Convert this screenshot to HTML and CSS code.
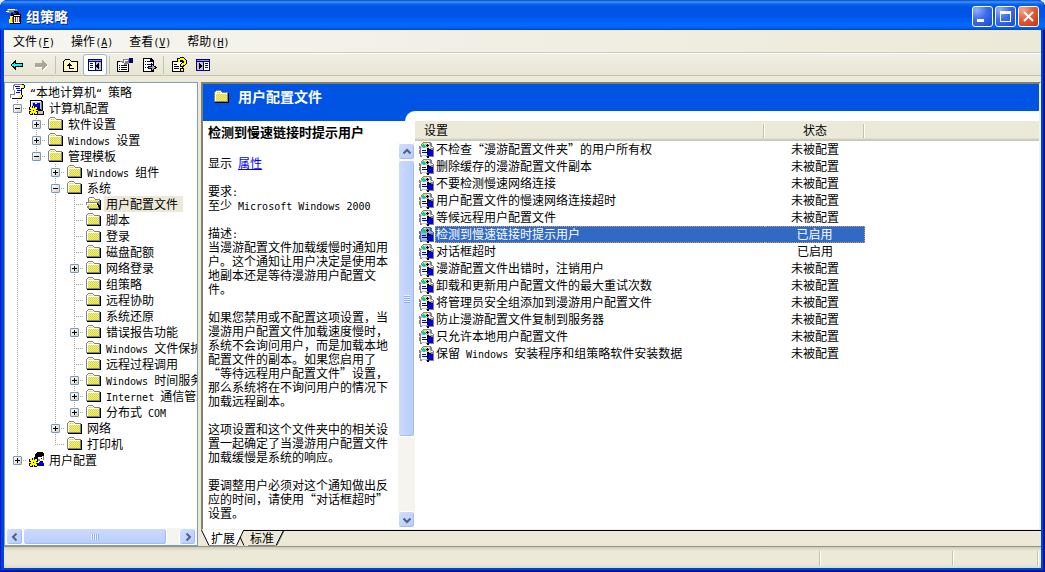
FILE: index.html
```html
<!DOCTYPE html>
<html lang="zh-CN">
<head>
<meta charset="utf-8">
<title>组策略</title>
<link rel="stylesheet" href="styles.css">
</head>
<body>
<svg class="defs" width="0" height="0" aria-hidden="true">
  <defs>
    <pattern id="dots" width="2" height="2" patternUnits="userSpaceOnUse">
      <rect width="2" height="2" fill="#ff0"/><rect width="1" height="1" fill="#c8c8c0"/><rect x="1" y="1" width="1" height="1" fill="#c8c8c0"/>
    </pattern>
    <pattern id="dots-alt" width="2" height="2" patternUnits="userSpaceOnUse">
      <rect width="2" height="2" fill="#c8c8c0"/><rect width="1" height="1" fill="#ff0"/><rect x="1" y="1" width="1" height="1" fill="#ff0"/>
    </pattern>
    <symbol id="folder" viewBox="0 0 16 16">
      <path fill="#848284" d="M2 1h5v1h1v1h6v10H0V3h1V2h1z"/>
      <path fill="#fff" d="M2 2h5v1h1v1h5v1H2v7H1V3h1z"/>
      <path fill="url(#dots)" d="M2 3h5v1H2zM2 5h11v7H2z"/>
      <path fill="#000" d="M14 4h1v10H1v-1h13z"/>
    </symbol>
    <symbol id="folder-open" viewBox="0 0 16 16">
      <path fill="#848284" d="M3 1h5v1h1v1h5v3h1v7H2v-1H1V9H0V6h2V2h1z"/>
      <path fill="#fff" d="M3 2h5v1h1v1h4v1H3zM1 7h10v1H2v2H1z"/>
      <path fill="url(#dots-alt)" d="M3 4h9v2H3zM2 8h9v1h1v3H3v-2H2z"/>
      <path fill="#000" d="M14 4h1v10H3v-1h10v-2h-1V9h-1V7h1v1h1v1h1z"/>
    </symbol>
    <symbol id="scroll" viewBox="0 0 16 16">
      <path fill="#848284" d="M4 0h9v1H5v1H4v4h1v5H1v3H0v-4h4V6H3V1h1z"/>
      <path fill="#fff" d="M5 1h6v2h1v2h-1v6H5V9h1V6H5zM1 11h8v3H2v-1H1z"/>
      <path fill="#000" d="M12 0h2v1h1v3h-1v1h-2v6h1v2h-1v2H2v-1h8v-3h1V4h1z"/>
      <path fill="#ff0" d="M12 1h2v3h-2zM9 11h3v2h-1v1H9z"/>
      <path fill="#00f" d="M5 2h5v1H5zM6 4h4v1H6zM7 6h4v1H7zM6 8h4v1H6z"/>
    </symbol>
    <symbol id="gear" viewBox="0 0 9 9">
      <path fill="#000" d="M3 0h3v1h3v7H8v1H1V8H0V1h3z"/>
      <path fill="#ff0" d="M4 0h1v2h1V1h2v2H7v1h2v1H7v1h1v2H6V7H5v2H4V7H3v1H1V6h1V5H0V4h2V3H1V1h2v1h1z"/>
      <path fill="#000" d="M4 4h1v1H4z"/>
    </symbol>
    <symbol id="computer" viewBox="0 0 16 16">
      <path fill="#000" d="M1 0h12v1h1v10h1v4H8V9H1z"/>
      <path fill="#c6c3c6" d="M2 1h10v8H2zM9 11h5v3H9z"/>
      <path fill="#fff" d="M2 1h10v1H3v6H2z"/>
      <path fill="#848284" d="M12 2h1v8h-1z"/>
      <path fill="#000084" d="M4 3h7v6H4z"/><path fill="#00f" d="M5 3h5v4H5z"/><path fill="#fff" d="M6 3h2v1H6z"/>
      <use href="#gear" x="0" y="6" width="9" height="9"/>
    </symbol>
    <symbol id="user" viewBox="0 0 16 16">
      <path fill="#000" d="M8 0h6v1h1v3h-2v1H9v4H5V5h1V2h1V1h1z"/>
      <path fill="#fff" d="M9 5h4V4h2v4h-1v2h-4z"/><path fill="#848284" d="M9 7h2v2H9zM14 4h1v4h-1z"/>
      <path fill="#000" d="M12 6h1v1h-1zM11 9h3v1h-3z"/>
      <path fill="#00f" d="M9 11l2-1h1l3 1v3H9z"/><path fill="#000084" d="M10 12h5v2h-5z"/>
      <use href="#gear" x="0" y="6" width="9" height="9"/>
    </symbol>
    <symbol id="policy" viewBox="0 0 16 16">
      <path class="tone-dark" d="M5 0h8v1h1v3h1v1h1v10H2v-3H1V8h1V7H1V4h2V2h1V1h1z"/>
      <path class="tone-mid" d="M5 1h7v3h1v3H3V5H2V4h2V2h1zM3 7h6v7H3z"/>
      <path class="tone-light" d="M3 6h6v7H3zM9 1h2v1H9zM11 4h1v2h-1zM4 14h4v1H4zM13 5h2v1h-2z"/>
      <path fill="#0cc" d="M4 3h1v1h1v1h1v1H5V5H4z"/><path fill="#0d4" d="M5 2h1v1h1v1h1v1H6V4H5z"/><path fill="#ff0" d="M6 1h2v1H6z"/>
      <path fill="#00f" d="M4 8h4v1H4zM4 10h4v1H4z"/>
      <path fill="#000" d="M9 2h1v1h1v1h-1v1H9V4H8V3h1zM9 6h2v1h2v1h-2v1h-1v4H9v-2H8v-1h1z"/>
      <path fill="#0000e0" d="M10 8h5v6h-5z"/><path fill="#000" d="M9 7h2v2H9zM9 14h2v2H9z"/>
    </symbol>
    <symbol id="console" viewBox="0 0 16 16">
      <path fill="#848284" d="M1 1h9l2 1 1 3h-2L9 4H6L4 5H1z"/><path fill="#fff" d="M2 1h7v1H2zM0 3h3v1H0z"/>
      <path fill="#000" d="M8 3h3l2 2v1h-3zM5 5h2v3H5zM4 15h4v1H4z"/>
      <path fill="#ff0" d="M4 8h3v7H3v-4h1z"/><path fill="#c60" d="M6 9h1v5H6z"/>
      <path fill="#000" d="M7 6h8v10H7z"/><path fill="#fff" d="M8 7h6v1H8zM8 9h6v6H8z"/><path fill="#c00" d="M9 9h1v5H9z"/><path fill="#848284" d="M11 9h1v5h-1z"/><path fill="#c00" d="M13 9h1v5h-1z"/>
    </symbol>
    <symbol id="left" viewBox="0 0 8 8"><path fill="none" stroke="#4d6185" stroke-width="2" d="M5.500 0.500L2 4l3.500 3.500"/></symbol>
    <symbol id="right" viewBox="0 0 8 8"><path fill="none" stroke="#4d6185" stroke-width="2" d="M2.500 0.500L6 4 2.500 7.500"/></symbol>
    <symbol id="up" viewBox="0 0 8 8"><path fill="none" stroke="#4d6185" stroke-width="2" d="M0.500 5.500L4 2l3.500 3.500"/></symbol>
    <symbol id="down" viewBox="0 0 8 8"><path fill="none" stroke="#4d6185" stroke-width="2" d="M0.500 2.500L4 6l3.500-3.500"/></symbol>
  </defs>
</svg>

<div class="window">
  <header class="titlebar">
    <svg class="icon"><use href="#console"/></svg>
    <h1>组策略</h1>
    <button class="caption" aria-label="最小化"><svg viewBox="0 0 19 19"><path fill="#fff" d="M4 12h7v3H4z"/></svg></button>
    <button class="caption" aria-label="最大化"><svg viewBox="0 0 19 19"><path fill="#fff" fill-rule="evenodd" d="M4 4h11v11H4zM5 7v7h9V7z"/></svg></button>
    <button class="caption close" aria-label="关闭"><svg viewBox="0 0 19 19"><path stroke="#fff" stroke-width="2" d="M5 5l9 9M14 5l-9 9"/></svg></button>
  </header>

  <nav class="menubar">
    <button>文件<span class="en">(<u>F</u>)</span></button>
    <button>操作<span class="en">(<u>A</u>)</span></button>
    <button>查看<span class="en">(<u>V</u>)</span></button>
    <button>帮助<span class="en">(<u>H</u>)</span></button>
  </nav>

  <div class="toolbar">
    <button aria-label="后退"><svg class="icon"><path fill="#000" d="M6 3h1v3h7v4H7v3H6v-1H5v-1H4v-1H3V9H2V7h1V6h1V5h1V4h1z"/><path fill="#0ff" d="M5 6h1v1h7v2H6v1H5V9H3V7h2z"/></svg></button>
    <button aria-label="前进" disabled><svg class="icon"><path fill="#fff" d="M10 4h1v1h1v1h1v1h1v1h1v2h-1v1h-1v1h-1v1h-1v1h-1v-3H3V7h7z"/><path fill="#aca899" d="M9 3h1v1h1v1h1v1h1v1h1v2h-1v1h-1v1h-1v1h-1v1H9v-3H2V6h7z"/></svg></button>
    <span class="sep"></span>
    <button aria-label="向上"><svg class="icon"><path fill="#000" d="M2 2h5v1h1v1h7v11H0V4h1V3h1z"/><path fill="#fff9c8" d="M2 3h5v1h1v1h6v9H1V4h1z"/><path fill="#000" d="M6 6h1v1h1v1h1v1H7v2h4v1H6V9H4V8h1V7h1z"/></svg></button>
    <button class="pressed" aria-label="显示/隐藏控制台树"><svg class="icon"><path fill="#000084" d="M1 2h14v12H1z"/><path fill="#fff" d="M2 5h6v8H2zM9 5h5v8H9z"/><path fill="#9c9cc6" d="M2 3h12v1H2z"/><path fill="#00a" d="M3 6h3v1H3zM3 8h3v1H3zM3 10h3v1H3z"/><path fill="#c6c3c6" d="M9 5h5v8H9z"/><path fill="#000" d="M12 6v6h-1v-1h-1v-1H9V8h1V7h1V6z"/></svg></button>
    <span class="sep"></span>
    <button aria-label="属性"><svg class="icon wide" viewBox="0 0 18 16"><path fill="#000" d="M1 4h12v11H1z"/><path fill="#fff" d="M2 5h10v9H2z"/><path fill="#000" d="M3 8h1v1H3zM5 8h6v1H5zM3 10h1v1H3zM5 10h6v1H5zM3 12h1v1H3zM5 12h6v1H5z"/><path fill="#848284" d="M7 2h6v5h-2v1H8V6H6V5H4V4h3z"/><path fill="#fff" d="M8 3h4v1H9v2H8z"/><path fill="#000084" d="M13 1h4v5h-4z"/></svg></button>
    <button aria-label="导出列表"><svg class="icon"><path fill="#000" d="M2 1h8l3 3v11H2z"/><path fill="#fff" d="M3 2h6v3h3v9H3z"/><path fill="#00a" d="M4 4h1v1H4zM6 4h3v1H6zM4 7h1v1H4zM6 7h4v1H6zM4 10h1v1H4zM6 10h2v1H6z"/><path fill="#000" d="M10 6l6 4.500-6 4.500v-3H7V9h3z"/><path fill="#aaa" d="M11 8l3 2.500-3 2.500v-2H8v-1h3z"/></svg></button>
    <span class="sep"></span>
    <button aria-label="帮助"><svg class="icon"><path fill="#000" d="M1 4h11v11H1z"/><path fill="#fff" d="M2 5h9v9H2z"/><path fill="#000" d="M3 7h3v1H3zM3 9h5v1H3zM3 11h5v1H3z"/><path fill="none" stroke="#000" stroke-width="4" d="M8 5V3l2-1h2l2 2v2l-3 2v2"/><path fill="none" stroke="#ff0" stroke-width="2" d="M8 5V3l2-1h2l2 2v2l-3 2v1"/><path fill="#000" d="M9 11h4v4H9z"/><path fill="#ff0" d="M10 12h2v2h-2z"/></svg></button>
    <button aria-label="显示/隐藏操作窗格"><svg class="icon"><path fill="#000084" d="M1 2h14v12H1z"/><path fill="#c6c3c6" d="M2 5h6v8H2z"/><path fill="#fff" d="M9 5h5v8H9z"/><path fill="#9c9cc6" d="M2 3h12v1H2z"/><path fill="#00a" d="M10 6h3v1h-3zM10 8h3v1h-3zM10 10h3v1h-3z"/><path fill="#000" d="M4 6h1v1h1v1h1v2H6v1H5v1H4z"/></svg></button>
  </div>

  <main class="body">
    <section class="tree-pane">
      <div class="tree-view">
        <div class="row"><svg class="icon"><use href="#scroll"/></svg><a href="#"><span class="en">“</span>本地计算机<span class="en">“ </span>策略</a></div>
        <ul>
          <li><div class="row"><span class="cell"><button class="tog" aria-label="折叠"></button></span><svg class="icon"><use href="#computer"/></svg><a href="#">计算机配置</a></div>
            <ul>
              <li><div class="row"><span class="cell"><button class="tog plus" aria-label="展开"></button></span><svg class="icon"><use href="#folder"/></svg><a href="#">软件设置</a></div></li>
              <li><div class="row"><span class="cell"><button class="tog plus" aria-label="展开"></button></span><svg class="icon"><use href="#folder"/></svg><a href="#"><span class="en">Windows </span>设置</a></div></li>
              <li><div class="row"><span class="cell"><button class="tog" aria-label="折叠"></button></span><svg class="icon"><use href="#folder"/></svg><a href="#">管理模板</a></div>
                <ul>
                  <li><div class="row"><span class="cell"><button class="tog plus" aria-label="展开"></button></span><svg class="icon"><use href="#folder"/></svg><a href="#"><span class="en">Windows </span>组件</a></div></li>
                  <li><div class="row"><span class="cell"><button class="tog" aria-label="折叠"></button></span><svg class="icon"><use href="#folder"/></svg><a href="#">系统</a></div>
                    <ul>
                      <li><div class="row"><span class="cell"></span><svg class="icon"><use href="#folder-open"/></svg><a class="current" href="#">用户配置文件</a></div></li>
                      <li><div class="row"><span class="cell"></span><svg class="icon"><use href="#folder"/></svg><a href="#">脚本</a></div></li>
                      <li><div class="row"><span class="cell"></span><svg class="icon"><use href="#folder"/></svg><a href="#">登录</a></div></li>
                      <li><div class="row"><span class="cell"></span><svg class="icon"><use href="#folder"/></svg><a href="#">磁盘配额</a></div></li>
                      <li><div class="row"><span class="cell"><button class="tog plus" aria-label="展开"></button></span><svg class="icon"><use href="#folder"/></svg><a href="#">网络登录</a></div></li>
                      <li><div class="row"><span class="cell"></span><svg class="icon"><use href="#folder"/></svg><a href="#">组策略</a></div></li>
                      <li><div class="row"><span class="cell"></span><svg class="icon"><use href="#folder"/></svg><a href="#">远程协助</a></div></li>
                      <li><div class="row"><span class="cell"></span><svg class="icon"><use href="#folder"/></svg><a href="#">系统还原</a></div></li>
                      <li><div class="row"><span class="cell"><button class="tog plus" aria-label="展开"></button></span><svg class="icon"><use href="#folder"/></svg><a href="#">错误报告功能</a></div></li>
                      <li><div class="row"><span class="cell"></span><svg class="icon"><use href="#folder"/></svg><a href="#"><span class="en">Windows </span>文件保护</a></div></li>
                      <li><div class="row"><span class="cell"></span><svg class="icon"><use href="#folder"/></svg><a href="#">远程过程调用</a></div></li>
                      <li><div class="row"><span class="cell"><button class="tog plus" aria-label="展开"></button></span><svg class="icon"><use href="#folder"/></svg><a href="#"><span class="en">Windows </span>时间服务</a></div></li>
                      <li><div class="row"><span class="cell"><button class="tog plus" aria-label="展开"></button></span><svg class="icon"><use href="#folder"/></svg><a href="#"><span class="en">Internet </span>通信管理</a></div></li>
                      <li><div class="row"><span class="cell"><button class="tog plus" aria-label="展开"></button></span><svg class="icon"><use href="#folder"/></svg><a href="#">分布式<span class="en"> COM</span></a></div></li>
                    </ul>
                  </li>
                  <li><div class="row"><span class="cell"><button class="tog plus" aria-label="展开"></button></span><svg class="icon"><use href="#folder"/></svg><a href="#">网络</a></div></li>
                  <li><div class="row"><span class="cell"></span><svg class="icon"><use href="#folder"/></svg><a href="#">打印机</a></div></li>
                </ul>
              </li>
            </ul>
          </li>
          <li><div class="row"><span class="cell"><button class="tog plus" aria-label="展开"></button></span><svg class="icon"><use href="#user"/></svg><a href="#">用户配置</a></div></li>
        </ul>
      </div>
      <div class="scrollbar horizontal">
        <button aria-label="向左滚动"><svg><use href="#left"/></svg></button>
        <div class="track"><div class="thumb"><span class="grip"></span></div></div>
        <button aria-label="向右滚动"><svg><use href="#right"/></svg></button>
      </div>
    </section>

    <section class="detail">
      <div class="detail-frame">
        <div class="banner"><svg class="icon"><use href="#folder"/></svg><h2>用户配置文件</h2></div>
        <div class="curve"><div></div></div>
        <div class="split">
          <article class="info">
            <h3>检测到慢速链接时提示用户</h3>
            <div class="info-scroll">
              <div class="info-text">
                <p>显示<span class="en"> </span><a href="#">属性</a></p>
                <p>要求<span class="en">:</span><br>至少<span class="en"> Microsoft Windows 2000</span></p>
                <p>描述<span class="en">:</span><br>当漫游配置文件加载缓慢时通知用户。这个通知让用户决定是使用本地副本还是等待漫游用户配置文件。</p>
                <p>如果您禁用或不配置这项设置，当漫游用户配置文件加载速度慢时，系统不会询问用户，而是加载本地配置文件的副本。如果您启用了“等待远程用户配置文件”设置，那么系统将在不询问用户的情况下加载远程副本。</p>
                <p>这项设置和这个文件夹中的相关设置一起确定了当漫游用户配置文件加载缓慢是系统的响应。</p>
                <p>要调整用户必须对这个通知做出反应的时间，请使用“对话框超时”设置。</p>
              </div>
              <div class="scrollbar vertical">
                <button aria-label="向上滚动"><svg><use href="#up"/></svg></button>
                <div class="track"><div class="thumb"><span class="grip"></span></div></div>
                <button aria-label="向下滚动"><svg><use href="#down"/></svg></button>
              </div>
            </div>
          </article>
          <div class="list">
            <table>
              <colgroup><col class="c-name"><col class="c-state"><col></colgroup>
              <thead><tr><th>设置</th><th>状态</th><th></th></tr></thead>
              <tbody>
                <tr><td><svg class="icon"><use href="#policy"/></svg><span>不检查“漫游配置文件夹”的用户所有权</span></td><td>未被配置</td><td></td></tr>
                <tr><td><svg class="icon"><use href="#policy"/></svg><span>删除缓存的漫游配置文件副本</span></td><td>未被配置</td><td></td></tr>
                <tr><td><svg class="icon"><use href="#policy"/></svg><span>不要检测慢速网络连接</span></td><td>未被配置</td><td></td></tr>
                <tr><td><svg class="icon"><use href="#policy"/></svg><span>用户配置文件的慢速网络连接超时</span></td><td>未被配置</td><td></td></tr>
                <tr><td><svg class="icon"><use href="#policy"/></svg><span>等候远程用户配置文件</span></td><td>未被配置</td><td></td></tr>
                <tr class="selected"><td><svg class="icon"><use href="#policy"/></svg><span>检测到慢速链接时提示用户</span></td><td>已启用</td><td></td></tr>
                <tr><td><svg class="icon"><use href="#policy"/></svg><span>对话框超时</span></td><td>已启用</td><td></td></tr>
                <tr><td><svg class="icon"><use href="#policy"/></svg><span>漫游配置文件出错时，注销用户</span></td><td>未被配置</td><td></td></tr>
                <tr><td><svg class="icon"><use href="#policy"/></svg><span>卸载和更新用户配置文件的最大重试次数</span></td><td>未被配置</td><td></td></tr>
                <tr><td><svg class="icon"><use href="#policy"/></svg><span>将管理员安全组添加到漫游用户配置文件</span></td><td>未被配置</td><td></td></tr>
                <tr><td><svg class="icon"><use href="#policy"/></svg><span>防止漫游配置文件复制到服务器</span></td><td>未被配置</td><td></td></tr>
                <tr><td><svg class="icon"><use href="#policy"/></svg><span>只允许本地用户配置文件</span></td><td>未被配置</td><td></td></tr>
                <tr><td><svg class="icon"><use href="#policy"/></svg><span>保留<span class="en"> Windows </span>安装程序和组策略软件安装数据</span></td><td>未被配置</td><td></td></tr>
              </tbody>
            </table>
          </div>
        </div>
      </div>
      <div class="tabs">
        <svg width="8" height="16" viewBox="0 0 8 16"><path fill="#fff" d="M0 0h8v16z"/><path stroke="#000" d="M0.500 0L8 15.500"/></svg>
        <button class="active">扩展</button>
        <svg width="12" height="16" viewBox="0 0 12 16"><path fill="#fff" d="M0 0h8L0 16z"/><path stroke="#000" fill="none" d="M7.500 0.500L0.500 15.500M4 7l4 8.500M7 0.500h5"/></svg>
        <button>标准</button>
        <svg width="10" height="16" viewBox="0 0 10 16"><path stroke="#848284" d="M9 1L2 15.500"/><path stroke="#000" fill="none" d="M8.500 0.500L1 15.500M0 0.500h10"/></svg>
        <span class="rule"></span>
      </div>
    </section>
  </main>

  <footer class="statusbar"><span class="main"></span><span class="mid"></span><span class="end"></span></footer>
</div>
</body>
</html>
```

FILE: styles.css
```css
* { box-sizing: border-box; }

body {
  margin: 0;
  background: #dfe8f6;
  color: #000;
  font: 12px/16px "Noto Sans CJK SC", sans-serif;
  text-spacing-trim: space-all;
}

h1, h2, h3, p, ul { margin: 0; padding: 0; }
ul { list-style: none; }
button { margin: 0; padding: 0; border: 0; background: none; color: inherit; font: inherit; }
a { color: inherit; text-decoration: none; }

.defs { display: block; position: absolute; }
.icon { display: block; flex: none; width: 16px; height: 16px; shape-rendering: crispEdges; }
.icon.wide { width: 18px; }
.en { font-family: "DejaVu Sans Mono", monospace; font-size: 10px; line-height: 0; white-space: pre; }

.tone-dark { fill: var(--tone-dark, #848284); }
.tone-mid { fill: var(--tone-mid, #c6c7c6); }
.tone-light { fill: var(--tone-light, #fff); }

.window {
  display: flex;
  flex-direction: column;
  height: 100vh;
  padding: 0 4px 4px;
  border-radius: 8px 8px 0 0;
  background: #0043dc;
  box-shadow: inset 1px 0 #0019cf, inset -1px 0 #00138c, inset -2px 0 #001ea0, inset 0 -1px #00138c, inset 0 -2px #001ea0;
  overflow: hidden;
}

.titlebar {
  display: flex;
  flex: none;
  align-items: center;
  gap: 2px;
  height: 30px;
  margin: 0 -4px;
  padding: 2px 6px 0;
  background: linear-gradient(#0a48c8 0, #3d95ff 2px, #0a64ee 4px, #0054e3 7px, #0055e8 16px, #0268fe 24px, #0266fb 27px, #0046d0 30px);
}
.titlebar h1 { flex: 1; padding-left: 2px; color: #fff; font-size: 14px; line-height: 20px; text-shadow: 1px 1px #0a2a8c; }

.caption {
  width: 21px;
  height: 21px;
  border: 1px solid #fff;
  border-radius: 3px;
  background: radial-gradient(circle at 20% 15%, #8fb0fa, #3c6df0 45%, #1b48cf);
}
.caption svg { display: block; width: 19px; height: 19px; }
.caption.close { background: radial-gradient(circle at 20% 15%, #f4a58e, #e35f3c 45%, #bf3410); }

.menubar {
  display: flex;
  flex: none;
  gap: 16px;
  height: 23px;
  padding: 0 9px;
  border-bottom: 1px solid #d0ccb9;
  background: linear-gradient(90deg, #f6f5f0, #ece9d8);
}

.toolbar {
  display: flex;
  flex: none;
  align-items: center;
  height: 23px;
  padding: 0 1px;
  border-top: 1px solid #fff;
  border-bottom: 1px solid #c5c2b0;
  background: linear-gradient(#f1efe4, #e8e5d5);
}
.toolbar button { display: grid; place-items: center; width: 24px; height: 22px; border: 1px solid transparent; border-radius: 3px; }
.toolbar .pressed { border-color: #98b5d2; background: #fff; }
.sep { width: 1px; height: 18px; margin: 0 3px 0 2px; background: #c5c2b0; }

.body { display: flex; flex: 1; gap: 3px; min-height: 0; padding-top: 6px; background: #ece9d8; }

.tree-pane {
  display: flex;
  flex: none;
  flex-direction: column;
  width: 194px;
  border: 1px solid #7f9db9;
  background: #fff;
}
.tree-view { flex: 1; min-height: 0; padding: 1px 0 0 3px; overflow: hidden; }
.tree-view ul ul { margin-left: 19px; }
.tree-view li { background: repeating-linear-gradient(#a9a695 0 1px, transparent 1px 2px) 9px 0 / 1px 100% no-repeat; }
.tree-view li:last-child { background-size: 1px 8px; }
.row { display: flex; align-items: center; height: 16px; white-space: nowrap; }
.row .icon { width: 16px; margin: 0 2px; }
.row a { padding: 0 5px 0 2px; }
.row .current { background: #ece9d8; }
.cell {
  display: flex;
  flex: none;
  align-items: center;
  width: 19px;
  height: 16px;
  padding-left: 5px;
  background: repeating-linear-gradient(90deg, #a9a695 0 1px, transparent 1px 2px) 9px 8px / 10px 1px no-repeat;
}
.tog {
  width: 9px;
  height: 9px;
  border: 1px solid #7898b5;
  border-radius: 1px;
  background: linear-gradient(#000, #000) center / 5px 1px no-repeat, linear-gradient(135deg, #fff, #d8d2c4);
}
.tog.plus { background: linear-gradient(#000, #000) center / 5px 1px no-repeat, linear-gradient(#000, #000) center / 1px 5px no-repeat, linear-gradient(135deg, #fff, #d8d2c4); }

.scrollbar { display: flex; flex: none; background: #f5f4ef; }
.scrollbar button, .thumb {
  display: grid;
  place-items: center;
  border: 1px solid #fff;
  border-radius: 3px;
  background: linear-gradient(135deg, #d0dffe, #b8cbf8);
  box-shadow: inset -1px -1px #a5bcee;
}
.scrollbar button { flex: none; width: 17px; height: 17px; }
.scrollbar svg { display: block; width: 8px; height: 8px; }
.track { flex: 1; min-height: 0; }
.horizontal { padding: 0 1px; }
.horizontal .thumb { width: 92%; height: 17px; background: linear-gradient(#cbdafe, #b9cdfa); }
.horizontal .grip { width: 8px; height: 6px; background: repeating-linear-gradient(90deg, #eef4ff 0 1px, #8cb0f8 1px 2px); }
.vertical { flex-direction: column; width: 17px; }
.vertical .thumb { width: 17px; height: 79%; background: linear-gradient(90deg, #cbdafe, #b9cdfa); }
.vertical .grip { width: 6px; height: 8px; background: repeating-linear-gradient(#eef4ff 0 1px, #8cb0f8 1px 2px); }

.detail { display: flex; flex: 1; flex-direction: column; min-width: 0; }
.detail-frame {
  display: flex;
  flex: 1;
  flex-direction: column;
  min-height: 0;
  border: 2px solid;
  border-color: #848070 #f4f2e8 #f4f2e8 #848070;
  border-bottom-width: 1px;
  background: #fff;
}
.banner { display: flex; flex: none; align-items: flex-start; height: 27px; padding: 2px 0 0 11px; background: #0054e3; color: #fff; }
.banner h2 { padding-left: 8px; font-size: 14px; line-height: 20px; }
.banner .icon { margin-top: 3px; }
.curve { flex: none; padding-left: 202px; background: #0054e3; }
.curve div { height: 10px; border-top-left-radius: 10px; background: #fff; }
.split { display: flex; flex: 1; min-height: 0; }

.info { display: flex; flex: none; flex-direction: column; width: 212px; }
.info h3 { padding-left: 5px; font-size: 13px; line-height: 22px; }
.info-scroll { display: flex; flex: 1; min-height: 0; padding-bottom: 1px; }
.info-text { flex: 1; padding: 13px 0 0 5px; line-height: 14px; overflow: hidden; }
.info-text p { margin-bottom: 14px; }
.info-text a { color: #00f; text-decoration: underline; }

.list { flex: 1; min-width: 0; overflow: hidden; }
.list table { width: 100%; border-collapse: separate; border-spacing: 0; table-layout: fixed; white-space: nowrap; }
.c-name { width: 350px; }
.c-state { width: 100px; }
.list th {
  height: 20px;
  padding: 0 0 2px;
  background: linear-gradient(90deg, #c5c2b0 1px, #fff 1px) right center / 2px 14px no-repeat, linear-gradient(#ece9d8 17px, #d8d4c3 18px, #c5c2b0);
  font-weight: normal;
  line-height: 18px;
}
.list th:first-child { padding-left: 9px; text-align: left; }
.list th:last-child { background: linear-gradient(#ece9d8 17px, #d8d4c3 18px, #c5c2b0); }
.list td { height: 17px; padding: 0 0 2px; line-height: 15px; text-align: center; }
.list td:first-child { display: flex; align-items: center; padding: 0 0 0 3px; text-align: left; }
.list td:first-child > span { flex: 1; height: 17px; margin-left: 1px; padding-left: 1px; }
.selected td:first-child > span, .selected td:nth-child(2) { border: 1px dotted #d8a04a; background: #316ac5; color: #fff; line-height: 13px; }
.selected td:first-child > span { padding-left: 0; border-right: 0; }
.selected td:nth-child(2) { border-left: 0; }
.selected .icon { --tone-dark: #4a6fa8; --tone-mid: #7f9fd0; --tone-light: #9db8e4; }

.tabs { display: flex; flex: none; height: 16px; }
.tabs svg { display: block; flex: none; fill: none; }
.tabs button { height: 16px; padding: 0 1px 0 2px; border-bottom: 1px solid #848284; line-height: 15px; }
.tabs button:not(.active) { border-top: 1px solid #000; line-height: 14px; }
.tabs .active { background: #fff; }
.rule { flex: 1; height: 1px; background: #000; }

.statusbar {
  display: flex;
  flex: none;
  height: 22px;
  padding: 4px 2px 2px;
  border-top: 1px solid #959284;
  background: linear-gradient(#d0ccba, #ece9d8 4px, #ece9d8 17px, #dedac8);
}
.statusbar span { border-right: 1px solid #fff; box-shadow: inset -1px 0 #c5c2b0; }
.statusbar .main { flex: 1; }
.statusbar .mid { width: 133px; }
.statusbar .end { width: 85px; }
```
